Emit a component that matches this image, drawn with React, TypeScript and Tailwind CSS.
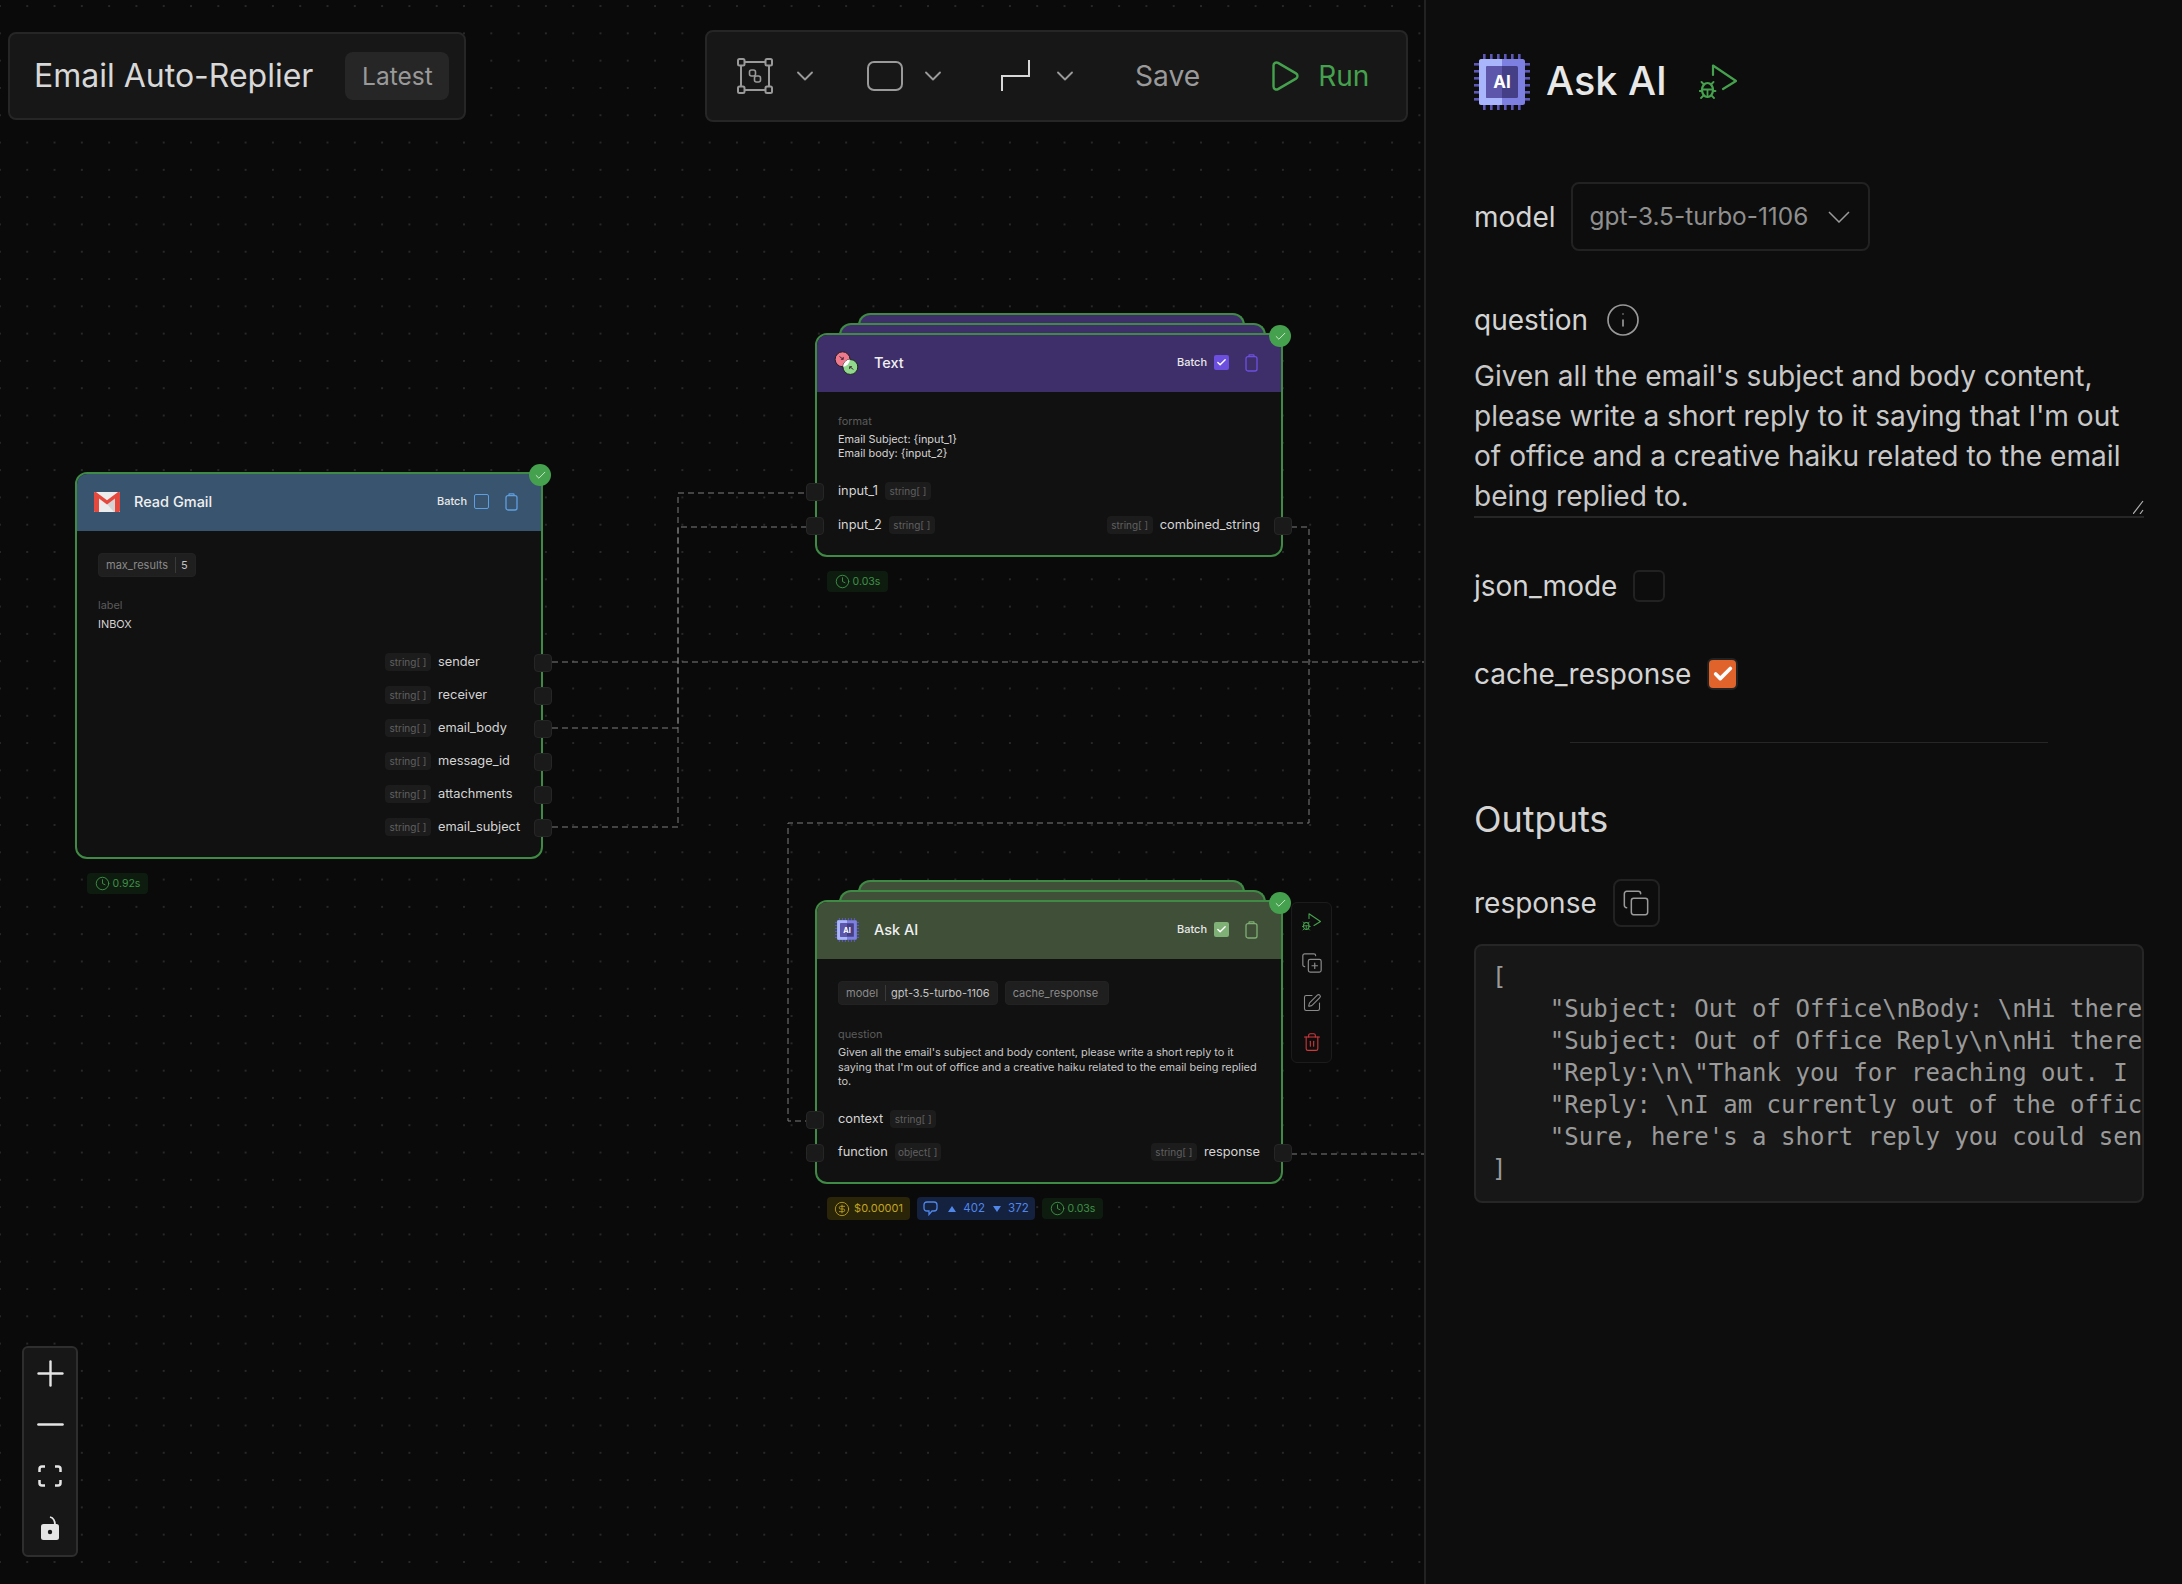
import type { ReactNode } from 'react';
import { Check, ChevronDown, Clock, Copy, CopyPlus, Info, Minus, Play, Plus, SquarePen, Trash2, CircleDollarSign } from 'lucide-react';

function ClipIcon({ className }: { className: string }) {
  return (
    <svg width="13" height="18" viewBox="0 0 13 18" fill="none" stroke="currentColor" strokeWidth="1.3" className={className}>
      <rect x="1" y="2.7" width="11" height="14.3" rx="2" />
      <path d="M4 2.7V1.4q0-.5.5-.5h4q.5 0 .5.5v1.3" />
    </svg>
  );
}

function GmailIcon() {
  return (
    <svg width="26" height="20" viewBox="0 0 26 20">
      <rect x="0" y="0" width="26" height="20" rx="1.5" fill="#ececec" />
      <path d="M13 12 26 3v17H20L13 12Z" fill="#d4d4d4" />
      <path d="M0 1.5C0 .4 1.4-.4 2.6.5L13 8.2 23.4.5C24.6-.4 26 .4 26 1.5V18.5C26 19.4 25.4 20 24.5 20H21V6.6L13 12.6 5 6.6V20H1.5C.6 20 0 19.4 0 18.5Z" fill="#e5483d" />
    </svg>
  );
}

function MergeIcon() {
  return (
    <svg width="28" height="28" viewBox="0 0 28 28" className="-translate-x-[1px]">
      <defs>
        <clipPath id="lens">
          <circle cx="10.3" cy="10" r="8" />
        </clipPath>
      </defs>
      <circle cx="10.3" cy="10" r="8" fill="#ef7a8e" stroke="#1b1b1b" />
      <circle cx="18.7" cy="18.3" r="8" fill="#90d98c" stroke="#1b1b1b" />
      <circle cx="18.7" cy="18.3" r="8" fill="#fff" clipPath="url(#lens)" />
      <path d="M7 7l4 3M11 7.5V10H8.5M22 21l-4-3M18 20.5V18h2.5" stroke="#3a2030" strokeWidth="1" fill="none" />
    </svg>
  );
}

function ChipIcon({ size }: { size: number }) {
  const pins = [8, 15, 22, 29, 36, 43];
  return (
    <svg width={size} height={size} viewBox="0 0 56 56">
      {pins.map((p) => (
        <g key={p} fill="#5d58b8">
          <rect x={p + 1} y="0" width="2.6" height="6" />
          <rect x={p + 1} y="50" width="2.6" height="6" />
          <rect x="0" y={p + 1} width="6" height="2.6" />
          <rect x="50" y={p + 1} width="6" height="2.6" />
        </g>
      ))}
      <rect x="5" y="5" width="46" height="46" rx="2.5" fill="#7d80e0" />
      <path d="M7.5 5H28V51H7.5Q5 51 5 48.5V7.5Q5 5 7.5 5Z" fill="#a9b6fb" />
      <rect x="12" y="12" width="32" height="32" rx="1.5" fill="#453f88" />
      <path d="M13.5 12H28V44H13.5Q12 44 12 42.5V13.5Q12 12 13.5 12Z" fill="#5d56ab" />
      <text x="28" y="34" textAnchor="middle" fontSize="17" fontWeight="700" fill="#fff" fontFamily="Inter, sans-serif">AI</text>
    </svg>
  );
}

function BugPlayIcon({ scale }: { scale: number }) {
  return (
    <svg width={38 * scale} height={36 * scale} viewBox="0 0 38 36" fill="none" stroke="#45a14d" strokeWidth="2.2" strokeLinecap="round" strokeLinejoin="round">
      <path d="M14 11V1.500L37 17 24 25" />
      <ellipse cx="8.500" cy="26" rx="5.500" ry="7" />
      <path d="M3 25.500h11M5 20.500 2.500 18M12 20.500 14.500 18M3 27H0.500M14 27h2.500M4.500 31.500 2 34M12.500 31.500 15 34M8.500 25.500V33" strokeWidth="1.800" />
    </svg>
  );
}

function ToolbarShapeIcon() {
  return (
    <svg width="36" height="36" viewBox="0 0 36 36" fill="none" stroke="#9a9a9a" strokeWidth="2">
      <rect x="4" y="4" width="28" height="28" />
      <rect x="1" y="1" width="6.5" height="6.5" rx="1.5" fill="#171717" />
      <rect x="28.5" y="1" width="6.5" height="6.5" rx="1.5" fill="#171717" />
      <rect x="1" y="28.5" width="6.5" height="6.5" rx="1.5" fill="#171717" />
      <rect x="28.5" y="28.5" width="6.5" height="6.5" rx="1.5" fill="#171717" />
      <rect x="12.5" y="12" width="6" height="6" rx="2" strokeWidth="1.6" />
      <rect x="17.5" y="18" width="6" height="6" rx="2" strokeWidth="1.6" />
    </svg>
  );
}

function Handle({ side }: { side: 'left' | 'right' }) {
  return (
    <span className={side === 'left'
      ? 'absolute -left-[11px] top-[1px] h-[18px] w-[18px] rounded-[4px] border border-[#262626] bg-[#1a1a1a]'
      : 'absolute -right-[11px] top-[1px] h-[18px] w-[18px] rounded-[4px] border border-[#262626] bg-[#1a1a1a]'} />
  );
}

function TypeChip({ label = 'string[ ]' }: { label?: string }) {
  return <span className="flex h-[18px] w-[46px] shrink-0 items-center justify-center rounded-[4px] bg-[#1c1c1c] text-[10px] text-[#606060]">{label}</span>;
}

function OutRow({ name, type }: { name: string; type?: string }) {
  return (
    <div className="flex items-center justify-end gap-[7px] text-[12.8px] leading-[18px] text-[#d4d4d4]">
      <TypeChip label={type} />
      <span>{name}</span>
    </div>
  );
}

function InRow({ name, type }: { name: string; type?: string }) {
  return (
    <div className="flex items-center gap-[7px] text-[12.8px] leading-[18px] text-[#d4d4d4]">
      <span>{name}</span>
      <TypeChip label={type} />
    </div>
  );
}

function BehindCards({ bg }: { bg: string }) {
  return (
    <>
      <div className={`absolute -top-[20px] left-[43px] right-[38px] h-[40px] rounded-t-[12px] border-2 border-b-0 border-[#3f8a45] ${bg}`} />
      <div className={`absolute -top-[10px] left-[24px] right-[17px] h-[40px] rounded-t-[12px] border-2 border-b-0 border-[#3f8a45] ${bg}`} />
    </>
  );
}

function NodeCard(props: { title: string; icon: ReactNode; header: string; accent: string; box: ReactNode; children: ReactNode }) {
  return (
    <div className="relative flex h-full flex-col rounded-[12px] border-2 border-[#3f8a45] bg-[#111111]">
      <div className={`flex h-[57px] shrink-0 items-center rounded-t-[10px] pb-[2px] pl-[17px] pr-[23px] ${props.header}`}>
        <div className="flex w-[26px] justify-center">{props.icon}</div>
        <span className="ml-[14px] text-[14.5px] font-medium text-[#f0f0f0]">{props.title}</span>
        <span className="ml-auto text-[11px] font-medium text-[#e8e8e8]">Batch</span>
        <span className="ml-[7px]">{props.box}</span>
        <ClipIcon className={`ml-[16px] ${props.accent}`} />
      </div>
      <span className="absolute -right-[10px] -top-[10px] flex h-[22px] w-[22px] items-center justify-center rounded-full bg-[#45a14d]">
        <Check size={13} strokeWidth={1.5} color="#e8f5e9" />
      </span>
      {props.children}
    </div>
  );
}

function Param({ name, value }: { name: string; value?: string }) {
  return (
    <span className={value
      ? 'flex h-[24px] items-center rounded-[4px] border border-[#222] bg-[#1f1f1f] px-[7px] text-[11px] text-[#8a8a8a]'
      : 'flex h-[24px] items-center rounded-[4px] border border-[#222] bg-[#1f1f1f] pl-[7px] pr-[10px] text-[11px] text-[#8a8a8a]'}>
      {name}
      {value && <span className="ml-[7px] border-l border-[#3a3a3a] pl-[5px] text-[#c4c4c4]">{value}</span>}
    </span>
  );
}

function TimeChip({ value }: { value: string }) {
  return (
    <span className="flex h-[21px] w-[61px] items-center justify-center gap-[3px] rounded-[4px] bg-[#0e1c10] text-[10.5px] text-[#3f9146]">
      <Clock size={15} strokeWidth={1.5} />
      {value}
    </span>
  );
}

function Edges() {
  return (
    <svg className="absolute inset-0 h-full w-full" fill="none" stroke="#7d7d7d" strokeWidth="1" strokeDasharray="6 4">
      <path d="M552 662H1424" />
      <path d="M552 728H678V527H806" />
      <path d="M552 827H678V493H806" />
      <path d="M1291 527H1309V823H788V1121H806" />
      <path d="M1291 1154H1424" />
    </svg>
  );
}

function Canvas() {
  return (
    <div className="relative h-full w-[1424px] shrink-0 overflow-hidden bg-[#0a0a0a] bg-[radial-gradient(circle,#404040_0.6px,transparent_0.8px)] bg-[size:27.3px_27.3px] bg-[position:13.6px_-7.6px]">
      <Edges />

      <div className="absolute left-[8px] top-[32px] flex h-[88px] w-[458px] items-center rounded-[8px] border-2 border-[#262626] bg-[#171717] pl-[24px]">
        <span className="text-[32px] text-[#d8d8d8]">Email Auto-Replier</span>
        <span className="ml-[32px] flex h-[48px] w-[104px] items-center justify-center rounded-[8px] bg-[#262626] text-[24.5px] text-[#999]">Latest</span>
      </div>

      <div className="absolute left-[705px] top-[30px] flex h-[92px] w-[703px] items-center rounded-[8px] border-2 border-[#262626] bg-[#171717] pl-[30px] text-[#9a9a9a]">
        <ToolbarShapeIcon />
        <ChevronDown size={28} strokeWidth={1.6} className="ml-[18px]" />
        <span className="ml-[48px] h-[30px] w-[36px] rounded-[7px] border-2 border-[#9a9a9a]" />
        <ChevronDown size={28} strokeWidth={1.6} className="ml-[16px]" />
        <svg width="30" height="32" viewBox="0 0 30 32" fill="none" stroke="#d8d8d8" strokeWidth="2" className="ml-[54px]">
          <path d="M1 31V16H28V0" />
        </svg>
        <ChevronDown size={28} strokeWidth={1.6} className="ml-[20px]" />
        <span className="ml-[56px] text-[28.2px]">Save</span>
        <Play size={36} strokeWidth={1.6} color="#45a14d" className="ml-[66px]" />
        <span className="ml-[16px] text-[28px] text-[#45a14d]">Run</span>
      </div>

      {/* Read Gmail */}
      <div className="absolute left-[75px] top-[472px] h-[387px] w-[468px]">
        <NodeCard
          title="Read Gmail"
          icon={<GmailIcon />}
          header="bg-[#38546e]"
          accent="text-[#5f9fe0]"
          box={<span className="block h-[15px] w-[15px] rounded-[2px] border border-[#5f9fe0]" />}
        >
          <div className="flex flex-1 flex-col px-[21px] pt-[22px]">
            <div className="flex"><Param name="max_results" value="5" /></div>
            <div className="mt-[21px] text-[10.9px] leading-[14px] text-[#5c5c5c]">label</div>
            <div className="mt-[5px] text-[10.9px] leading-[14px] text-[#d4d4d4]">INBOX</div>
            <div className="mt-[22px] flex flex-col gap-[15px]">
              {['sender', 'receiver', 'email_body', 'message_id', 'attachments', 'email_subject'].map((name) => (
                <div key={name} className="relative">
                  <div className="flex items-center gap-[7px] pl-[287px] text-[12.8px] leading-[18px] text-[#d4d4d4]">
                    <TypeChip />
                    <span className="whitespace-nowrap">{name}</span>
                  </div>
                  <span className="absolute -right-[32px] top-[1px] h-[18px] w-[18px] rounded-[4px] border border-[#262626] bg-[#1a1a1a]" />
                </div>
              ))}
            </div>
          </div>
        </NodeCard>
      </div>
      <div className="absolute left-[87px] top-[873px]"><TimeChip value="0.92s" /></div>

      {/* Text */}
      <div className="absolute left-[815px] top-[333px] h-[224px] w-[468px]">
        <BehindCards bg="bg-[#3e2f6b]" />
        <NodeCard
          title="Text"
          icon={<MergeIcon />}
          header="bg-[#3e2f6b]"
          accent="text-[#6d4fe0]"
          box={<span className="flex h-[15px] w-[15px] items-center justify-center rounded-[2px] bg-[#6d4fe0]"><Check size={11} strokeWidth={3} color="#fff" /></span>}
        >
          <div className="px-[21px] pt-[22px]">
            <div className="text-[10.9px] leading-[14px] text-[#5c5c5c]">format</div>
            <div className="mt-[4px] text-[10.9px] leading-[14px] text-[#d4d4d4]">Email Subject: {'{input_1}'}<br />Email body: {'{input_2}'}</div>
          </div>
          <div className="relative mt-[22px] px-[21px]">
            <Handle side="left" />
            <InRow name="input_1" />
          </div>
          <div className="relative mt-[16px] flex items-center justify-between px-[21px]">
            <Handle side="left" />
            <InRow name="input_2" />
            <OutRow name="combined_string" />
            <Handle side="right" />
          </div>
        </NodeCard>
      </div>
      <div className="absolute left-[827px] top-[571px]"><TimeChip value="0.03s" /></div>

      {/* Ask AI */}
      <div className="absolute left-[815px] top-[900px] h-[284px] w-[468px]">
        <BehindCards bg="bg-[#3f4f38]" />
        <NodeCard
          title="Ask AI"
          icon={<ChipIcon size={24} />}
          header="bg-[#3f4f38]"
          accent="text-[#7fae73]"
          box={<span className="flex h-[15px] w-[15px] items-center justify-center rounded-[2px] bg-[#7fb075]"><Check size={11} strokeWidth={3} color="#fff" /></span>}
        >
          <div className="px-[21px] pt-[22px]">
            <div className="flex gap-[7px]">
              <Param name="model" value="gpt-3.5-turbo-1106" />
              <Param name="cache_response" />
            </div>
            <div className="mt-[22px] text-[10.9px] leading-[14px] text-[#5c5c5c]">question</div>
            <div className="mt-[4px] text-[10.9px] leading-[14.5px] text-[#c8c8c8]">
              Given all the email's subject and body content, please write a short reply to it saying that I'm out of office and a creative haiku related to the email being replied to.
            </div>
          </div>
          <div className="relative mt-[21px] px-[21px]">
            <Handle side="left" />
            <InRow name="context" />
          </div>
          <div className="relative mt-[15px] flex items-center justify-between px-[21px]">
            <Handle side="left" />
            <InRow name="function" type="object[ ]" />
            <OutRow name="response" />
            <Handle side="right" />
          </div>
        </NodeCard>
        <div className="absolute left-[476px] top-[2px] flex h-[161px] w-[41px] flex-col items-center gap-[19px] rounded-[6px] border border-[#1c1c1c] bg-[#0d0d0d] pt-[10px] text-[#8a8a8a]">
          <span className="mb-[2px]"><BugPlayIcon scale={0.5} /></span>
          <CopyPlus size={22} strokeWidth={1.3} />
          <SquarePen size={20} strokeWidth={1.3} />
          <Trash2 size={20} strokeWidth={1.3} color="#d0383c" />
        </div>
      </div>
      <div className="absolute left-[827px] top-[1197px] flex items-center gap-[7px] text-[11.5px]">
        <span className="flex h-[23px] w-[83px] items-center justify-center gap-[4px] rounded-[4px] bg-[#2a2408] text-[11px] text-[#c2a51f]">
          <CircleDollarSign size={16} strokeWidth={1.3} />
          $0.00001
        </span>
        <span className="flex h-[23px] w-[118px] items-center justify-center rounded-[4px] bg-[#14213f] text-[#4f86e8]">
          <svg width="15" height="15" viewBox="0 0 15 15" fill="none" stroke="currentColor" strokeWidth="1.3"><path d="M4 1h7q3 0 3 3v3q0 3-3 3H9l-3 3.500V10H4Q1 10 1 7V4q0-3 3-3Z" /></svg>
          <svg width="8" height="6" viewBox="0 0 8 6" fill="currentColor" className="ml-[10px]"><path d="M4 0l4 6H0Z" /></svg>
          <span className="ml-[7px]">402</span>
          <svg width="8" height="6" viewBox="0 0 8 6" fill="currentColor" className="ml-[8px]"><path d="M4 6 8 0H0Z" /></svg>
          <span className="ml-[7px]">372</span>
        </span>
        <TimeChip value="0.03s" />
      </div>

      {/* zoom controls */}
      <div className="absolute left-[22px] top-[1346px] flex h-[211px] w-[56px] flex-col items-center rounded-[6px] border-2 border-[#2e2e2e] bg-[#171717] pt-[5px] text-[#e5e5e5]">
        <Plus size={41} strokeWidth={1.4} />
        <Minus size={41} strokeWidth={1.6} className="mt-[10px]" />
        <svg width="24" height="22" viewBox="0 0 24 22" fill="none" stroke="currentColor" strokeWidth="2.500" className="mt-[20px]">
          <path d="M1.500 7V4Q1.500 1.500 4 1.500H7M17 1.500h3Q22.500 1.500 22.500 4V7M22.500 15v3Q22.500 20.500 20 20.500H17M7 20.500H4Q1.500 20.500 1.500 18V15" />
        </svg>
        <svg width="20" height="24" viewBox="0 0 20 24" className="mt-[29px]">
          <path d="M15 9C15 5 14 2 10 1" fill="none" stroke="#e5e5e5" strokeWidth="1.800" />
          <rect x="1" y="8" width="18" height="16" rx="2.500" fill="#e5e5e5" />
          <circle cx="10" cy="16" r="2.200" fill="#171717" />
        </svg>
      </div>
    </div>
  );
}

function Panel() {
  return (
    <div className="h-full flex-1 overflow-hidden border-l-2 border-[#222] bg-[#0d0d0d] pl-[48px] pr-[38px] pt-[53px] text-[#d4d4d4]">
      <div className="flex h-[57px] items-center">
        <ChipIcon size={56} />
        <span className="ml-[16px] text-[39.6px] font-medium leading-none text-[#e8e8e8]">Ask AI</span>
        <span className="ml-[32px]"><BugPlayIcon scale={1} /></span>
      </div>

      <div className="mt-[72px] flex h-[69px] items-center">
        <span className="text-[28px]">model</span>
        <div className="ml-[15px] flex h-[69px] w-[299px] items-center rounded-[8px] border-2 border-[#222] pl-[17px] text-[24.4px] text-[#8f8f8f]">
          gpt-3.5-turbo-1106
          <svg width="22" height="12" viewBox="0 0 22 12" fill="none" stroke="#9a9a9a" strokeWidth="1.500" className="ml-[20px]">
            <path d="M1 1l10 10L21 1" />
          </svg>
        </div>
      </div>

      <div className="mt-[52px] flex h-[34px] items-center">
        <span className="text-[28px]">question</span>
        <Info size={36} strokeWidth={1.1} color="#9a9a9a" className="ml-[17px]" />
      </div>

      <div className="relative mt-[19px] h-[162px] border-b-2 border-[#262626] text-[28.08px] leading-[40px] text-[#c8c8c8]">
        Given all the email's subject and body content, please write a short reply to it saying that I'm out of office and a creative haiku related to the email being replied to.
        <svg width="11" height="14" viewBox="0 0 11 14" fill="none" stroke="#b0b0b0" strokeWidth="1.200" className="absolute bottom-[2px] right-0">
          <path d="M0 14 10 1M7 14l3-4" />
        </svg>
      </div>

      <div className="mt-[52px] flex h-[32px] items-center">
        <span className="text-[28px]">json_mode</span>
        <span className="ml-[16px] h-[32px] w-[32px] rounded-[6px] border-2 border-[#222]" />
      </div>

      <div className="mt-[56px] flex h-[32px] items-center">
        <span className="text-[28px]">cache_response</span>
        <span className="ml-[16px] flex h-[32px] w-[31px] items-center justify-center rounded-[6px] border-2 border-[#222] bg-[#e0632c]">
          <Check size={22} strokeWidth={4} color="#fff" />
        </span>
      </div>

      <div className="ml-[96px] mt-[52px] h-px w-[478px] bg-[#262626]" />

      <div className="mt-[54px] text-[36px] leading-[44px]">Outputs</div>

      <div className="mt-[38px] flex h-[48px] items-center">
        <span className="text-[28px]">response</span>
        <span className="ml-[16px] flex h-[48px] w-[47px] items-center justify-center rounded-[8px] border-2 border-[#222]">
          <Copy size={28} strokeWidth={1.3} color="#9a9a9a" />
        </span>
      </div>

      <div className="mt-[17px] h-[259px] overflow-hidden rounded-[8px] border-2 border-[#262626] bg-[#171717] pl-[16px] pt-[15px]">
        <pre className="font-[family-name:'DejaVu_Sans_Mono',monospace] text-[24px] leading-[32px] text-[#9a9a9a]">{`[
    "Subject: Out of Office\\nBody: \\nHi there, thank you
    "Subject: Out of Office Reply\\n\\nHi there, thank you
    "Reply:\\n\\"Thank you for reaching out. I am currently
    "Reply: \\nI am currently out of the office and will
    "Sure, here's a short reply you could send to the
]`}</pre>
      </div>
    </div>
  );
}

export default function App() {
  return (
    <div className="flex h-[1584px] w-[2182px] overflow-hidden font-[family-name:Inter,sans-serif]">
      <Canvas />
      <Panel />
    </div>
  );
}
